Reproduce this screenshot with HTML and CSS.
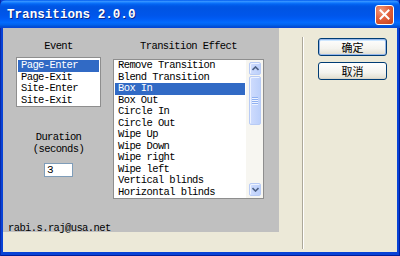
FILE: index.html
```html
<!DOCTYPE html>
<html lang="en">
<head>
<meta charset="UTF-8" />
<title>Transitions 2.0.0</title>
<link rel="stylesheet" href="styles.css">
</head>
<body>

<div class="window">
  <div class="titlebar">
    <span class="title">Transitions 2.0.0</span>
    <span class="close">
      <svg width="11" height="11" viewBox="0 0 11 11"><path d="M1.5 1.5 L9.5 9.5 M9.5 1.5 L1.5 9.5" stroke="#fff" stroke-width="2" stroke-linecap="square"/></svg>
    </span>
  </div>

  <div class="client">
    <div class="left">
      <div class="panel">
        <div class="columns">
          <div class="col col-event">
            <div class="label">Event</div>
            <ul class="listbox event-list">
              <li class="selected">Page-Enter</li>
              <li>Page-Exit</li>
              <li>Site-Enter</li>
              <li>Site-Exit</li>
            </ul>
            <div class="label duration">Duration<br>(seconds)</div>
            <input class="textbox" type="text" value="3" />
          </div>

          <div class="col col-effect">
            <div class="label">Transition Effect</div>
            <div class="listbox effect-list">
              <ul>
                <li>Remove Transition</li>
                <li>Blend Transition</li>
                <li class="selected">Box In</li>
                <li>Box Out</li>
                <li>Circle In</li>
                <li>Circle Out</li>
                <li>Wipe Up</li>
                <li>Wipe Down</li>
                <li>Wipe right</li>
                <li>Wipe left</li>
                <li>Vertical blinds</li>
                <li>Horizontal blinds</li>
              </ul>
              <div class="scrollbar">
                <div class="sb-btn">
                  <svg width="7" height="5" viewBox="0 0 7 5"><path d="M0.5 4 L3.5 1 L6.5 4" fill="none" stroke="#4d6185" stroke-width="1.6"/></svg>
                </div>
                <div class="sb-thumb"><span></span><span></span><span></span><span></span></div>
                <div class="sb-track"></div>
                <div class="sb-btn">
                  <svg width="7" height="5" viewBox="0 0 7 5"><path d="M0.5 1 L3.5 4 L6.5 1" fill="none" stroke="#4d6185" stroke-width="1.6"/></svg>
                </div>
              </div>
            </div>
          </div>
        </div>
        <div class="email">rabi.s.raj@usa.net</div>
      </div>
    </div>

    <div class="separator"></div>

    <div class="buttons">
      <button class="btn default">确定</button>
      <button class="btn">取消</button>
    </div>
  </div>
</div>

</body>
</html>
```

FILE: styles.css
```css
* { box-sizing: border-box; }
body {
  margin: 0;
  font-family: 'Liberation Mono', 'DejaVu Sans Mono', monospace;
  font-size: 10.5px;
  letter-spacing: -0.6px;
  color: #000;
}
.window {
  width: 400px;
  height: 256px;
  display: flex;
  flex-direction: column;
  background: #0842d6;
  padding-bottom: 4px;
  box-shadow: inset 1px 0 #0a2aa8, inset -1px 0 #001d9a, inset 0 -1px #001d9a;
}
.titlebar {
  height: 28px;
  display: flex;
  align-items: center;
  justify-content: space-between;
  padding: 0 6px 0 7px;
  border-radius: 6px 6px 0 0;
  background: linear-gradient(to bottom, #0058ee 0%, #3593ff 5%, #1a80ff 9%, #0366f4 14%, #0057e5 22%, #0054e3 30%, #0056eb 56%, #005cf5 68%, #036bfd 80%, #0263ef 88%, #0053d8 94%, #0842d6 100%);
}
.title {
  font-size: 12.6px;
  font-weight: 700;
  letter-spacing: 0;
  color: #fff;
  text-shadow: 1px 1px #0a2a8c;
  padding-top: 1px;
}
.close {
  width: 19px;
  height: 20px;
  margin-top: 1px;
  border: 1px solid #fff;
  border-radius: 3px;
  display: flex;
  align-items: center;
  justify-content: center;
  background: radial-gradient(circle at 30% 25%, #f29a7c 0%, #e2603c 45%, #c4401a 100%);
}
.client {
  flex: 1;
  display: flex;
  margin: 0 3px;
  background: #ece9d8;
}
.left { width: 276px; }
.panel {
  height: 204px;
  background: #c0c0c0;
  display: flex;
  flex-direction: column;
  padding: 12px 0 0 5px;
}
.columns {
  display: flex;
  gap: 12px;
  margin-left: 8px;
}
.col {
  display: flex;
  flex-direction: column;
  align-items: center;
}
.col-event { width: 85px; }
.col-effect { width: 151px; }
.label {
  line-height: 12px;
  text-align: center;
}
.listbox {
  background: #fff;
  border: 1px solid #8e8e8e;
  list-style: none;
  margin: 0;
  width: 100%;
}
.listbox li {
  line-height: 11.5px;
  height: 11.5px;
  padding-left: 3px;
  white-space: nowrap;
}
.listbox li.selected {
  background: #316ac5;
  color: #fff;
}
.event-list {
  margin-top: 5px;
  height: 50px;
  padding: 2px 1px;
}
.duration { margin-top: 24px; }
.textbox {
  margin-top: 8px;
  width: 29px;
  height: 14px;
  border: 1px solid #7f9db9;
  padding: 0 2px;
  font: inherit;
  font-size: 11px;
  line-height: 12px;
  background: #fff;
  outline: none;
}
.effect-list {
  margin-top: 7px;
  height: 140px;
  display: flex;
}
.effect-list ul {
  flex: 1;
  list-style: none;
  margin: 0;
  padding: 0 1px;
}
.scrollbar {
  width: 17px;
  padding: 2px 2px 2px 3px;
  background: #f7f6f1;
  display: flex;
  flex-direction: column;
}
.sb-btn, .sb-thumb {
  border: 1px solid #b8cbf5;
  border-radius: 2px;
  background: linear-gradient(to right, #cfdcfd, #bcd0fb);
  box-shadow: inset 1px 1px #eef3ff;
}
.sb-btn {
  height: 13px;
  display: flex;
  align-items: center;
  justify-content: center;
}
.sb-thumb {
  height: 49px;
  margin-top: 1px;
  display: flex;
  flex-direction: column;
  align-items: center;
  justify-content: center;
  gap: 1px;
}
.sb-thumb span {
  width: 6px;
  height: 1px;
  background: #8fb0f0;
  box-shadow: 0 1px #eef3ff;
}
.sb-track { flex: 1; }
.email {
  margin-top: auto;
  margin-bottom: -2px;
  line-height: 12px;
}
.separator {
  width: 2px;
  margin: 9px 0 3px 23px;
  border-left: 1px solid #aca899;
  border-right: 1px solid #fff;
}
.buttons {
  padding: 10px 0 0 14px;
  display: flex;
  flex-direction: column;
  gap: 6px;
}
.btn {
  width: 69px;
  height: 18px;
  padding: 0;
  border: 1px solid #003c74;
  border-radius: 3px;
  background: linear-gradient(to bottom, #ffffff 0%, #f4f3ee 60%, #e6e3d6 90%, #d6d0c5 100%);
  font-family: 'Noto Sans CJK SC', sans-serif;
  font-size: 11px;
  line-height: 14px;
  letter-spacing: 0;
  color: #000;
}
.btn.default {
  box-shadow: inset 0 0 0 1px #98b8ea, inset 0 1px 0 1px #cee7ff;
}
```
